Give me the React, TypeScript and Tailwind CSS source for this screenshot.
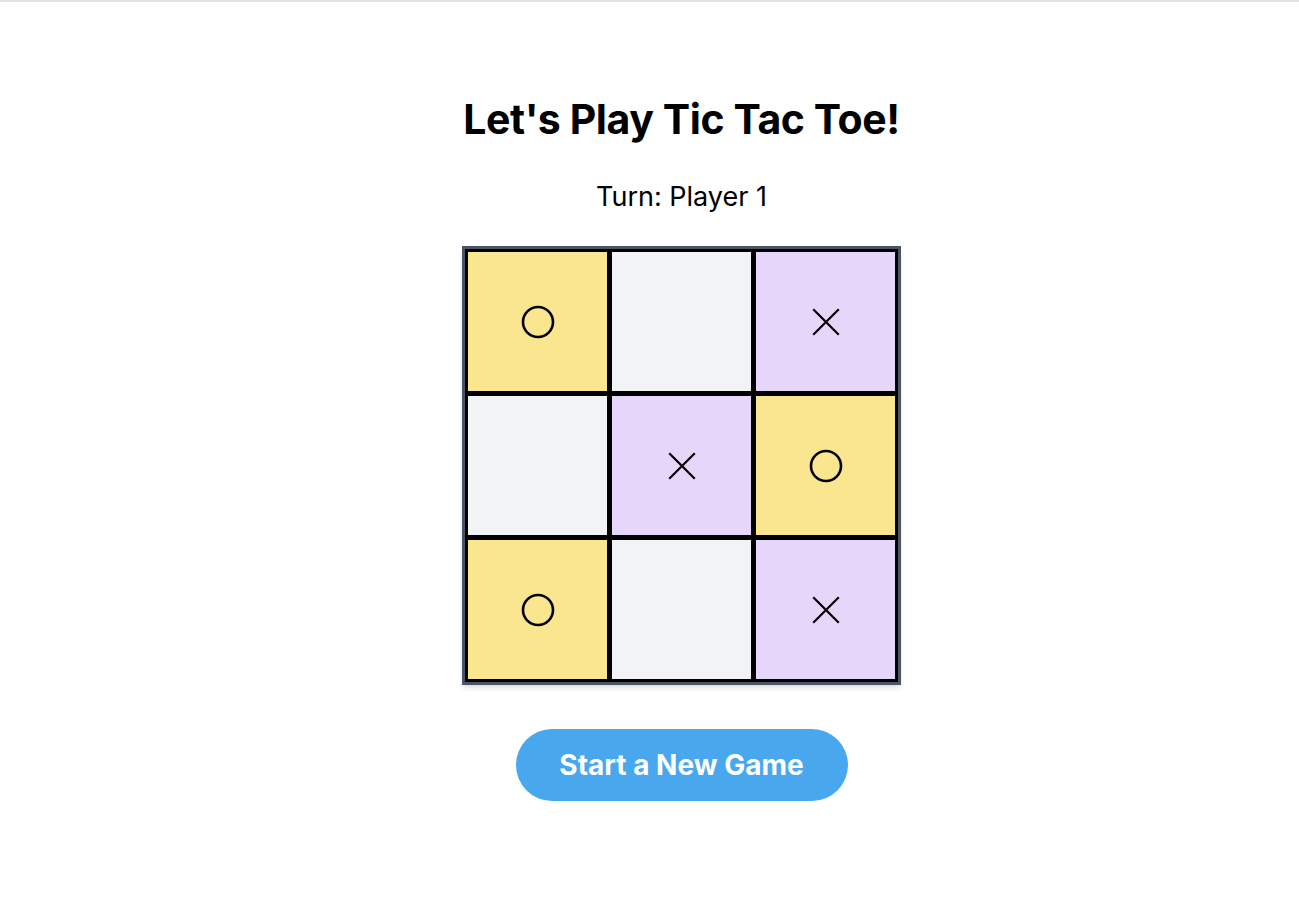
import { useState } from "react"

type Mark = "O" | "X" | null

const start: Mark[] = ["O", null, "X", null, "X", "O", "O", null, "X"]

function Circle() {
  return (
    <svg width="36" height="36" viewBox="0 0 36 36" fill="none">
      <circle cx="18" cy="18" r="15" stroke="black" strokeWidth="2.6" />
    </svg>
  )
}

function Cross() {
  return (
    <svg width="30" height="30" viewBox="0 0 30 30" fill="none">
      <path d="M3 3L27 27M27 3L3 27" stroke="black" strokeWidth="2.2" strokeLinecap="square" />
    </svg>
  )
}

export default function App() {
  const [board, setBoard] = useState<Mark[]>(start)
  const [turn, setTurn] = useState<1 | 2>(1)

  const play = (i: number) => {
    if (board[i]) return
    const next = [...board]
    next[i] = turn === 1 ? "O" : "X"
    setBoard(next)
    setTurn(turn === 1 ? 2 : 1)
  }

  return (
    <div
      className="min-h-screen border-t-2 border-[#e3e3e3] bg-white text-black"
      style={{ fontFamily: "Inter, 'Noto Sans', sans-serif" }}
    >
      <div className="flex flex-col items-center pl-16 pt-[93px]">
        <h1 className="text-[41px] font-bold leading-[48px] tracking-[-0.01em]">Let's Play Tic Tac Toe!</h1>
        <p className="mt-[38px] text-[27px] leading-8">Turn: Player {turn}</p>
        <div className="mt-[33px] border-[3px] border-[#4b5563] shadow-md">
          <div className="grid grid-cols-3 gap-[5px] bg-black p-[3px]">
            {board.map((m, i) => (
              <button
                key={i}
                onClick={() => play(i)}
                className={
                  "flex h-[139px] w-[139px] items-center justify-center " +
                  (m === "O" ? "bg-[#fae68f]" : m === "X" ? "bg-[#e6d6fa]" : "bg-[#f2f3f5]")
                }
              >
                {m === "O" ? <Circle /> : m === "X" ? <Cross /> : null}
              </button>
            ))}
          </div>
        </div>
        <button
          onClick={() => {
            setBoard(Array(9).fill(null))
            setTurn(1)
          }}
          className="mt-[44px] h-[72px] w-[332px] rounded-full bg-[#49a7ee] text-[28px] font-bold text-white"
        >
          Start a New Game
        </button>
      </div>
    </div>
  )
}
